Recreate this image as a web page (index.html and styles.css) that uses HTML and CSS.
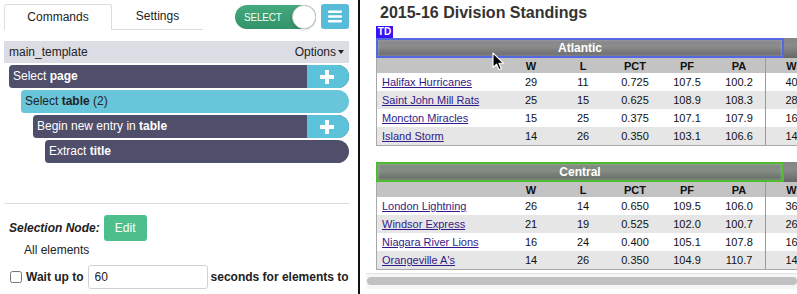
FILE: index.html
```html
<!DOCTYPE html>
<html lang="en">
<head>
    <meta charset="UTF-8">
    <title>Scraper - Division Standings</title>
    <link rel="stylesheet" href="styles.css">
</head>
<body>
<div class="app">
    <aside class="editor">
        <div class="topbar">
            <div class="tabs">
                <div class="tab active">Commands</div>
                <div class="tab">Settings</div>
            </div>
            <div class="toggle">
                <span class="toggle-text">SELECT</span>
                <span class="knob"></span>
            </div>
            <button class="menu-btn" type="button">
                <svg width="14" height="13" viewBox="0 0 14 13"><rect x="0" y="0.5" width="14" height="2.6" rx="1" fill="#fff"/><rect x="0" y="5.2" width="14" height="2.6" rx="1" fill="#fff"/><rect x="0" y="9.9" width="14" height="2.6" rx="1" fill="#fff"/></svg>
            </button>
        </div>

        <div class="template-bar">
            <span>main_template</span>
            <span class="options">Options<span class="caret"></span></span>
        </div>

        <ul class="commands">
            <li class="cmd dark lvl0">
                <span class="cmd-label">Select <b>page</b></span>
                <span class="cmd-add"><svg width="14" height="14" viewBox="0 0 14 14"><rect x="5" y="0" width="4" height="14" fill="#fff"/><rect x="0" y="5" width="14" height="4" fill="#fff"/></svg></span>
            </li>
            <li class="cmd light lvl1">
                <span class="cmd-label">Select <b>table</b> (2)</span>
            </li>
            <li class="cmd dark lvl2">
                <span class="cmd-label">Begin new entry in <b>table</b></span>
                <span class="cmd-add"><svg width="14" height="14" viewBox="0 0 14 14"><rect x="5" y="0" width="4" height="14" fill="#fff"/><rect x="0" y="5" width="14" height="4" fill="#fff"/></svg></span>
            </li>
            <li class="cmd dark lvl3">
                <span class="cmd-label">Extract <b>title</b></span>
            </li>
        </ul>

        <hr class="divider">

        <div class="node-row">
            <em class="node-label">Selection Node:</em>
            <button class="btn-edit" type="button">Edit</button>
        </div>
        <div class="node-value">All elements</div>
        <div class="wait-row">
            <input type="checkbox" class="wait-check">
            <b>Wait up to</b>
            <input type="text" class="wait-input" value="60">
            <b>seconds for elements to</b>
        </div>
    </aside>

    <main class="preview">
        <h2 class="title">2015-16 Division Standings</h2>

        <section class="division">
            <span class="tag">TD</span>
            <div class="div-head">
                <div class="head-name hl-blue">Atlantic</div>
                <div class="head-rest"></div>
            </div>
            <table class="standings">
                <colgroup>
                    <col class="c-team"><col><col><col><col><col><col><col><col>
                </colgroup>
                <thead>
                    <tr><th></th><th>W</th><th>L</th><th>PCT</th><th>PF</th><th>PA</th><th class="grp">W</th><th>L</th><th>PCT</th></tr>
                </thead>
                <tbody>
                    <tr><td class="team"><a href="#">Halifax Hurricanes</a></td><td>29</td><td>11</td><td>0.725</td><td>107.5</td><td>100.2</td><td class="grp">40</td><td>20</td><td>0.667</td></tr>
                    <tr><td class="team"><a href="#">Saint John Mill Rats</a></td><td>25</td><td>15</td><td>0.625</td><td>108.9</td><td>108.3</td><td class="grp">28</td><td>32</td><td>0.467</td></tr>
                    <tr><td class="team"><a href="#">Moncton Miracles</a></td><td>15</td><td>25</td><td>0.375</td><td>107.1</td><td>107.9</td><td class="grp">16</td><td>44</td><td>0.267</td></tr>
                    <tr><td class="team"><a href="#">Island Storm</a></td><td>14</td><td>26</td><td>0.350</td><td>103.1</td><td>106.6</td><td class="grp">14</td><td>46</td><td>0.233</td></tr>
                </tbody>
            </table>
        </section>

        <section class="division">
            <div class="div-head">
                <div class="head-name hl-green">Central</div>
                <div class="head-rest"></div>
            </div>
            <table class="standings">
                <colgroup>
                    <col class="c-team"><col><col><col><col><col><col><col><col>
                </colgroup>
                <thead>
                    <tr><th></th><th>W</th><th>L</th><th>PCT</th><th>PF</th><th>PA</th><th class="grp">W</th><th>L</th><th>PCT</th></tr>
                </thead>
                <tbody>
                    <tr><td class="team"><a href="#">London Lightning</a></td><td>26</td><td>14</td><td>0.650</td><td>109.5</td><td>106.0</td><td class="grp">36</td><td>24</td><td>0.600</td></tr>
                    <tr><td class="team"><a href="#">Windsor Express</a></td><td>21</td><td>19</td><td>0.525</td><td>102.0</td><td>100.7</td><td class="grp">26</td><td>34</td><td>0.433</td></tr>
                    <tr><td class="team"><a href="#">Niagara River Lions</a></td><td>16</td><td>24</td><td>0.400</td><td>105.1</td><td>107.8</td><td class="grp">16</td><td>44</td><td>0.267</td></tr>
                    <tr><td class="team"><a href="#">Orangeville A's</a></td><td>14</td><td>26</td><td>0.350</td><td>104.9</td><td>110.7</td><td class="grp">14</td><td>46</td><td>0.233</td></tr>
                </tbody>
            </table>
        </section>

        <div class="hscroll"><div class="hscroll-thumb"></div></div>

        <svg class="cursor" width="13" height="20" viewBox="0 0 13 20">
            <path d="M1 1 L1 15.5 L4.6 12.2 L7 17.8 L9.3 16.8 L6.9 11.3 L11.6 11.3 Z" fill="#000" stroke="#fff" stroke-width="1.1" stroke-linejoin="round"/>
        </svg>
    </main>
</div>
</body>
</html>
```

FILE: styles.css
```css
:root {
    --dark-cmd: #4f4e6b;
    --light-cmd: #68c6db;
    --plus-blue: #5bc2da;
    --green: #4cbf8c;
    --link: #331a88;
}

* {
    box-sizing: border-box;
}

body {
    margin: 0;
    font-family: "Liberation Sans", Arial, sans-serif;
    font-size: 12px;
    color: #222;
    background: #fff;
    overflow: hidden;
}

.app {
    display: flex;
    height: 294px;
    overflow: hidden;
}

/* ---------- left editor ---------- */

.editor {
    width: 360px;
    flex: none;
    padding: 4px 9px 0 4px;
    border-right: 2px solid #111;
}

.topbar {
    display: flex;
    align-items: flex-start;
    height: 26px;
}

.tabs {
    display: flex;
}

.tab {
    width: 91px;
    height: 26px;
    line-height: 25px;
    text-align: center;
    border-bottom: 1px solid #ddd;
    color: #222;
}

.tab.active {
    width: 108px;
    line-height: 24px;
    border: 1px solid #ddd;
    border-bottom: none;
    border-radius: 3px 3px 0 0;
}

.toggle {
    margin: 1px 0 0 32px;
    width: 81px;
    height: 24px;
    border-radius: 12px;
    background: linear-gradient(#45aa7d, #33926a);
    display: flex;
    align-items: center;
    justify-content: space-between;
    padding-left: 9px;
}

.toggle-text {
    color: #f4fff8;
    font-size: 10px;
    letter-spacing: -0.2px;
}

.knob {
    width: 24px;
    height: 24px;
    border-radius: 50%;
    background: #fff;
    border: 1px solid #cfd4d2;
    box-shadow: -1px 1px 3px rgba(0, 0, 0, 0.15);
}

.menu-btn {
    margin-left: 5px;
    width: 28px;
    height: 25px;
    padding: 0;
    border: none;
    border-radius: 3px;
    background: #58bcd8;
    display: flex;
    align-items: center;
    justify-content: center;
}

.template-bar {
    margin-top: 11px;
    height: 22px;
    padding: 0 5px;
    background: #dcdce4;
    display: flex;
    justify-content: space-between;
    align-items: center;
}

.options {
    display: flex;
    align-items: center;
}

.caret {
    margin-left: 2px;
    border-top: 4px solid #222;
    border-left: 3.5px solid transparent;
    border-right: 3.5px solid transparent;
}

.commands {
    list-style: none;
    margin: 2px 0 0;
    padding: 0;
    display: flex;
    flex-direction: column;
    gap: 2px;
}

.cmd {
    height: 23px;
    display: flex;
    border-radius: 4px 12px 12px 4px;
    overflow: hidden;
}

.cmd.lvl0 { margin-left: 5px; }
.cmd.lvl1 { margin-left: 17px; }
.cmd.lvl2 { margin-left: 29px; }
.cmd.lvl3 { margin-left: 41px; }

.cmd.dark {
    background: var(--dark-cmd);
    color: #fff;
}

.cmd.light {
    background: var(--light-cmd);
    color: #222;
}

.cmd-label {
    flex: 1;
    padding-left: 4px;
    line-height: 23px;
}

.cmd-add {
    width: 42px;
    background: var(--plus-blue);
    display: flex;
    align-items: center;
    justify-content: center;
    padding-right: 2px;
}

.divider {
    margin: 40px 0 0;
    border: 0;
    border-top: 1px solid #dcdce4;
}

.node-row {
    margin-top: 11px;
    padding-left: 5px;
    display: flex;
    align-items: center;
    gap: 4px;
}

.node-label {
    font-weight: bold;
    color: #222;
}

.btn-edit {
    width: 43px;
    height: 26px;
    padding: 0;
    border: none;
    border-radius: 3px;
    background: var(--green);
    color: #fff;
    font-family: inherit;
    font-size: 12px;
}

.node-value {
    padding-left: 20px;
    line-height: 18px;
}

.wait-row {
    margin-top: 6px;
    height: 24px;
    display: flex;
    align-items: center;
    white-space: nowrap;
}

.wait-check {
    margin: 0 4px 0 6px;
    width: 12px;
    height: 12px;
}

.wait-input {
    margin: 0 3px 0 4px;
    width: 120px;
    height: 24px;
    padding: 0 6px;
    border: 1px solid #d0d0d6;
    border-radius: 3px;
    font-family: inherit;
    font-size: 12px;
    color: #222;
}

/* ---------- right preview ---------- */

.preview {
    flex: 1;
    position: relative;
    overflow: hidden;
    padding-left: 16px;
}

.title {
    margin: 0;
    height: 38px;
    padding: 3px 0 0 4px;
    font-size: 16px;
    line-height: 19px;
    color: #333;
}

.division {
    position: relative;
    width: 700px;
}

.division + .division {
    margin-top: 16px;
}

.tag {
    position: absolute;
    left: 0;
    top: -12px;
    width: 17px;
    height: 12px;
    background: #3a12f2;
    color: #fff;
    font-size: 10px;
    font-weight: bold;
    line-height: 12px;
    text-align: center;
}

.div-head {
    display: flex;
    height: 20px;
}

.head-name {
    width: 408px;
    color: #fff;
    font-weight: bold;
    text-align: center;
    line-height: 16px;
    background: linear-gradient(#868686, #8c8c8c 40%, #6a6a6a);
    border: 2px solid;
}

.hl-blue {
    border-color: #5468e2;
    box-shadow: inset 0 0 3px rgba(200, 210, 255, 0.5);
}

.hl-green {
    border-color: #4dbb2c;
    background: linear-gradient(#7c867c, #858d85 40%, #646b64);
    box-shadow: inset 0 0 3px rgba(210, 255, 200, 0.5);
}

.head-rest {
    flex: 1;
    background: linear-gradient(#858585, #8a8a8a 40%, #676767);
}

.standings {
    border-collapse: separate;
    border-spacing: 0;
    table-layout: fixed;
    width: 545px;
    border-left: 1px solid #a8a8a8;
    border-bottom: 1px solid #a8a8a8;
    font-size: 11px;
}

.standings col {
    width: 52px;
}

.standings col.c-team {
    width: 128px;
}

.standings th {
    height: 15px;
    padding: 0;
    background: #c3c3c3;
    font-weight: bold;
    color: #111;
    text-align: center;
}

.standings td {
    height: 18px;
    padding: 0;
    text-align: center;
    color: #111;
}

.standings td.team {
    text-align: left;
    padding-left: 5px;
    white-space: nowrap;
}

.standings tbody tr:nth-child(even) td {
    background: #e6e6e6;
}

.standings .grp {
    border-left: 1px solid #9a9a9a;
}

.standings a {
    color: var(--link);
    text-decoration: underline;
}

.hscroll {
    margin: 3px 0 0 -10px;
    height: 16px;
    background: #f6f6f6;
    border-top: 1px solid #e2e2e2;
    padding: 3px 0 0 1px;
}

.hscroll-thumb {
    height: 8px;
    border-radius: 4px;
    background: #c1c1c1;
}

.cursor {
    position: absolute;
    left: 132px;
    top: 52px;
}
```
